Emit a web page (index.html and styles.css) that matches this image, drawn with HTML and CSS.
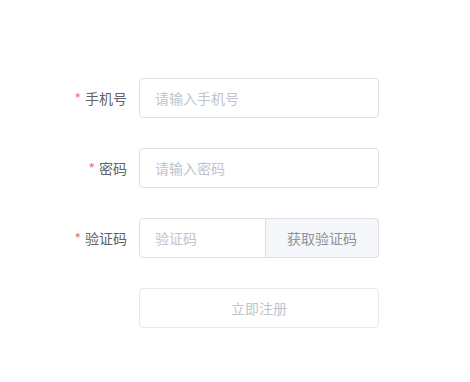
FILE: index.html
```html
<!DOCTYPE html>
<html lang="zh">
<head>
<meta charset="utf-8">
<link rel="stylesheet" href="styles.css">
</head>
<body>
<form class="form">
  <div class="item">
    <label class="label"><span class="req">*</span>手机号</label>
    <div class="control"><input class="input" placeholder="请输入手机号"></div>
  </div>
  <div class="item">
    <label class="label"><span class="req">*</span>密码</label>
    <div class="control"><input class="input" type="password" placeholder="请输入密码"></div>
  </div>
  <div class="item">
    <label class="label"><span class="req">*</span>验证码</label>
    <div class="control group">
      <input class="input input-grouped" placeholder="验证码">
      <div class="append">获取验证码</div>
    </div>
  </div>
  <div class="item">
    <div class="label"></div>
    <div class="control"><button type="button" class="btn">立即注册</button></div>
  </div>
</form>
</body>
</html>
```
FILE: styles.css
```css
html, body {
  margin: 0;
  padding: 0;
  background: #fff;
}
body {
  font-family: "Noto Sans CJK SC", "Noto Sans", sans-serif;
  font-size: 14px;
  color: #606266;
}
.form {
  padding-top: 78px;
  display: flex;
  flex-direction: column;
  gap: 30px;
}
.item {
  display: flex;
  height: 40px;
}
.label {
  width: 127px;
  padding-right: 12px;
  text-align: right;
  line-height: 40px;
  font-size: 14px;
  color: #606266;
  flex: none;
}
.req {
  color: #f56c6c;
  margin-right: 4px;
}
.control {
  width: 240px;
  height: 40px;
}
.input {
  box-sizing: border-box;
  width: 240px;
  height: 40px;
  border: 1px solid #dcdfe6;
  border-radius: 4px;
  padding: 0 15px;
  font-family: inherit;
  font-size: 14px;
  color: #606266;
  outline: none;
  background: #fff;
}
.input::placeholder {
  color: #c0c4cc;
}
.group {
  display: flex;
}
.input-grouped {
  width: 127px;
  border-top-right-radius: 0;
  border-bottom-right-radius: 0;
}
.append {
  box-sizing: border-box;
  width: 113px;
  height: 40px;
  background: #f5f7fa;
  border: 1px solid #dcdfe6;
  border-left: none;
  border-radius: 0 4px 4px 0;
  color: #909399;
  line-height: 38px;
  text-align: center;
  font-size: 14px;
}
.btn {
  box-sizing: border-box;
  width: 240px;
  height: 40px;
  border: 1px solid #e4e7ed;
  border-radius: 4px;
  background: #fff;
  color: #c0c4cc;
  font-family: inherit;
  font-size: 14px;
  padding: 0;
}
```
